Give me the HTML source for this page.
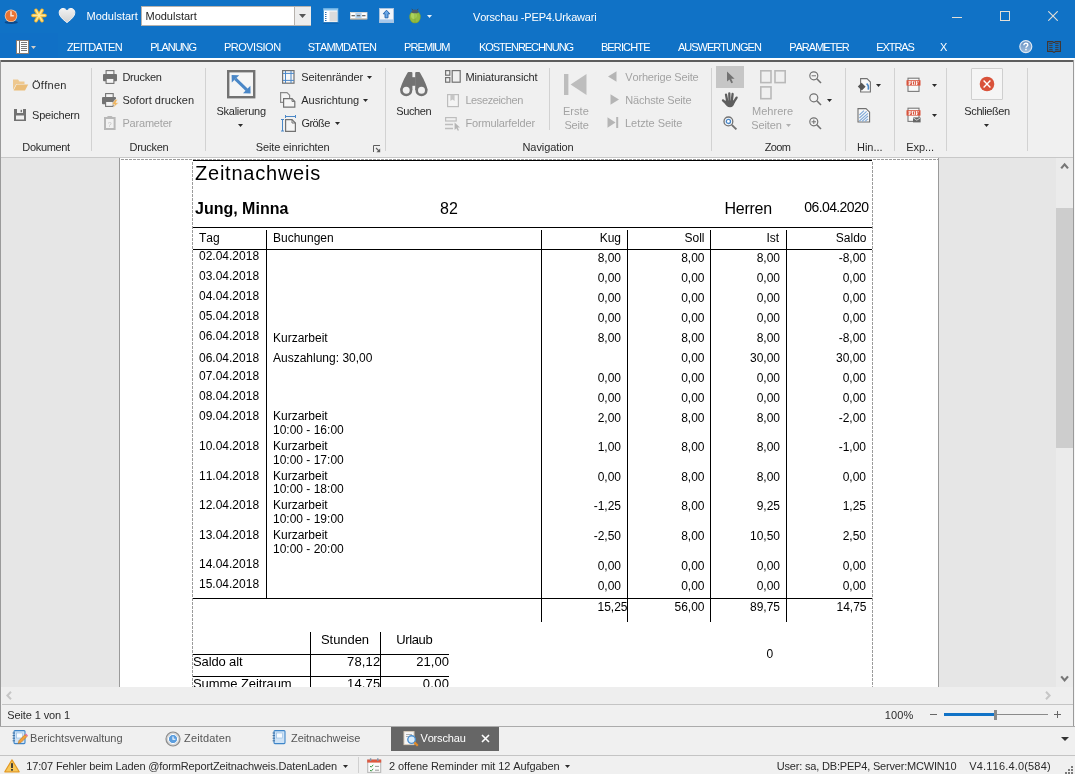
<!DOCTYPE html>
<html><head><meta charset="utf-8"><title>Vorschau</title>
<style>
html,body{margin:0;padding:0;}
body{width:1075px;height:774px;position:relative;overflow:hidden;background:#f0f0f0;font-family:"Liberation Sans",sans-serif;font-kerning:none;}
#app{position:absolute;left:0;top:0;width:1075px;height:774px;will-change:transform;}
.r{position:absolute;display:block;}
.t{position:absolute;white-space:nowrap;color:#2b2b2b;font-family:"Liberation Sans",sans-serif;font-kerning:none;}
.w{color:#fff;}
.g{color:#a3a3a3;}
.d{color:#000;}
</style></head><body><div id="app">
<div class="r" style="left:0px;top:0px;width:1075px;height:58px;background:#1072c6;"></div>
<div class="r" style="left:0px;top:58px;width:1075px;height:2px;background:#ffffff;"></div>
<div class="r" style="left:0px;top:60px;width:1074px;height:2px;background:#5e5e5e;"></div>
<div class="r" style="left:0px;top:62px;width:1075px;height:95px;background:#f0f0f0;"></div>
<div class="r" style="left:0px;top:157px;width:1075px;height:1px;background:#c8c8c8;"></div>
<div class="r" style="left:0px;top:158px;width:1075px;height:529px;background:#e6e6e6;"></div>
<div class="r" style="left:0px;top:60px;width:1px;height:714px;background:#9a9a9a;"></div>
<div class="r" style="left:1073px;top:60px;width:1px;height:714px;background:#9a9a9a;"></div>
<div class="r" style="left:1074px;top:58px;width:1px;height:716px;background:#f6f6f6;"></div>
<svg class="r" style="left:3px;top:7px" width="18" height="20" viewBox="0 0 18 20">
<ellipse cx="8.2" cy="15.4" rx="6.6" ry="1.6" fill="#0b4a8c"/>
<circle cx="8" cy="8.8" r="6.3" fill="#f6c9a8"/>
<circle cx="8" cy="8.8" r="5.5" fill="#ea7434"/>
<path d="M8 4.2V8.8H10.8" stroke="#f6e4d8" stroke-width="1.5" fill="none"/>
</svg>
<svg class="r" style="left:30px;top:7px" width="18" height="17" viewBox="0 0 18 17">
<g stroke="#f3b02c" stroke-width="3.6" stroke-linecap="round">
<path d="M3 8.5H15"/><path d="M6 3.3L12 13.7"/><path d="M12 3.3L6 13.7"/>
</g>
<g stroke="#fbd566" stroke-width="2.2" stroke-linecap="round">
<path d="M3 8.5H15"/><path d="M6 3.3L12 13.7"/><path d="M12 3.3L6 13.7"/>
</g>
<g stroke="#feeeb0" stroke-width="0.9" stroke-linecap="round">
<path d="M3.4 8.3H14.6"/><path d="M6.2 3.5L11.8 13.3"/><path d="M11.8 3.5L6.2 13.3"/>
</g>
</svg>
<svg class="r" style="left:58px;top:7px" width="18" height="17" viewBox="0 0 18 17">
<defs><linearGradient id="hg" x1="0" y1="0" x2="0" y2="1"><stop offset="0" stop-color="#f2f2f2"/><stop offset="1" stop-color="#d2d2d2"/></linearGradient></defs>
<path d="M9 15.6C4.4 12 1.2 9.2 1.2 5.4C1.2 3 3 1.4 5 1.4C6.8 1.4 8.2 2.4 9 4C9.8 2.4 11.2 1.4 13 1.4C15 1.4 16.8 3 16.8 5.4C16.8 9.2 13.6 12 9 15.6Z" fill="url(#hg)" stroke="#f4f4f4" stroke-width="1"/>
</svg>
<div class="t w" style="left:86.5px;top:9.0px;font-size:11px;line-height:14px;letter-spacing:-0.008px;">Modulstart</div>
<div class="r" style="left:141px;top:6px;width:170px;height:20px;background:#ffffff;box-sizing:border-box;border:1px solid #b7b2ad;"></div>
<div class="r" style="left:294px;top:7px;width:16px;height:18px;background:#ededed;border-left:1px solid #b7b2ad;"></div>
<svg class="r" style="left:299px;top:14.0px" width="7" height="4" viewBox="0 0 7 4"><path d="M0 0H7L3.5 4Z" fill="#555"/></svg>
<div class="t " style="left:145.5px;top:9.0px;font-size:11px;line-height:14px; color:#1e1e1e;letter-spacing:-0.008px;">Modulstart</div>
<svg class="r" style="left:323px;top:8px" width="16" height="16" viewBox="0 0 16 16">
<rect x="0.5" y="0.5" width="14.5" height="14" fill="#fff" stroke="#4b9ad6" stroke-width="1"/>
<rect x="0.5" y="0.5" width="14.5" height="2" fill="#8cc4ee"/>
<rect x="6.5" y="3.5" width="7.5" height="10" fill="#dcdcdc"/>
<g fill="#2f6fb0"><rect x="2" y="4" width="1.5" height="1"/><rect x="2" y="6" width="1.5" height="1"/><rect x="2" y="8" width="1.5" height="1"/><rect x="2" y="10" width="1.5" height="1"/><rect x="2" y="12" width="1.5" height="1"/></g>
<rect x="0" y="14.5" width="15.5" height="1" fill="#0a5aa6"/>
</svg>
<svg class="r" style="left:350px;top:12px" width="18" height="8" viewBox="0 0 18 8">
<rect x="0.5" y="0.5" width="16.5" height="6.4" fill="#ffffff" stroke="#e6ddd0" stroke-width="0.8"/>
<rect x="5.4" y="0.8" width="6.2" height="5.6" fill="#b5d2ec"/>
<rect x="1.5" y="3" width="3.4" height="1.3" fill="#6a6a6a"/><rect x="6.8" y="3" width="3.4" height="1.3" fill="#6a6a6a"/><rect x="12.1" y="3" width="3.4" height="1.3" fill="#6a6a6a"/>
<rect x="0.5" y="6.6" width="16.5" height="0.9" fill="#b9a58c"/>
</svg>
<svg class="r" style="left:379px;top:8px" width="15" height="15" viewBox="0 0 15 15">
<rect x="0.5" y="0.5" width="14" height="14" fill="#f1f5fa" stroke="#a9c3de" stroke-width="1"/>
<rect x="1" y="11.4" width="13" height="2.8" fill="#a6c8ec"/>
<path d="M7.5 2.2L10.8 5.8H9V9.8H6V5.8H4.2Z" fill="#6aa7e6" stroke="#1f62ad" stroke-width="0.9" stroke-linejoin="round"/>
</svg>
<svg class="r" style="left:408px;top:8px" width="14" height="16" viewBox="0 0 14 16">
<path d="M3.8 0.8L5.2 2.6M10.2 0.8L8.8 2.6" stroke="#3f4d58" stroke-width="1"/>
<ellipse cx="7" cy="9" rx="5.7" ry="6.3" fill="#7fa634"/>
<ellipse cx="7" cy="9" rx="5" ry="5.6" fill="#93bb42"/>
<ellipse cx="5.8" cy="7.6" rx="2.8" ry="3.4" fill="#aed35c"/>
<path d="M7 5V15" stroke="#7fa634" stroke-width="0.6"/>
<path d="M3.2 4.4C4 2.2 5.4 1.6 7 1.6C8.6 1.6 10 2.2 10.8 4.4C9.6 5 8.4 5.2 7 5.2C5.6 5.2 4.4 5 3.2 4.4Z" fill="#4c5b6a"/>
</svg>
<svg class="r" style="left:427px;top:15.0px" width="5" height="3" viewBox="0 0 5 3"><path d="M0 0H5L2.5 3Z" fill="#e8f0f8"/></svg>
<div class="t w" style="left:473px;top:10.0px;font-size:11px;line-height:14px;letter-spacing:-0.186px;">Vorschau -PEP4.Urkawari</div>
<div class="r" style="left:952px;top:17px;width:10px;height:1px;background:#e4dfd6;"></div>
<div class="r" style="left:1000px;top:11px;width:10px;height:10px;background:transparent;box-sizing:border-box;border:1px solid #e4dfd6;"></div>
<svg class="r" style="left:1048px;top:11px" width="10" height="10" viewBox="0 0 10 10"><path d="M0.3 0.3L9.7 9.7M9.7 0.3L0.3 9.7" stroke="#e4dfd6" stroke-width="1.1"/></svg>
<div class="r" style="left:0px;top:33px;width:58px;height:25px;background:#1070c6;"></div>
<svg class="r" style="left:16px;top:40px" width="13" height="14" viewBox="0 0 13 14">
<rect x="0.5" y="0.5" width="12" height="13" fill="#fff" stroke="#8c7868" stroke-width="0.9"/>
<rect x="3" y="1" width="1" height="12" fill="#6e6e6e"/>
<g fill="#7a7a7a"><rect x="5" y="2" width="6" height="1"/><rect x="5" y="4" width="6" height="1"/><rect x="5" y="6" width="6" height="1"/><rect x="5" y="8" width="6" height="1"/><rect x="5" y="10" width="6" height="1"/></g>
</svg>
<svg class="r" style="left:30.6px;top:45.7px" width="5" height="3" viewBox="0 0 5 3"><path d="M0 0H5L2.5 3Z" fill="#d2cdc6"/></svg>
<div class="t w" style="left:67.1px;top:40.0px;font-size:11px;line-height:14px;letter-spacing:-0.692px;">ZEITDATEN</div>
<div class="t w" style="left:150.2px;top:40.0px;font-size:11px;line-height:14px;letter-spacing:-1.050px;">PLANUNG</div>
<div class="t w" style="left:223.9px;top:40.0px;font-size:11px;line-height:14px;letter-spacing:-0.492px;">PROVISION</div>
<div class="t w" style="left:307.8px;top:40.0px;font-size:11px;line-height:14px;letter-spacing:-0.879px;">STAMMDATEN</div>
<div class="t w" style="left:404.0px;top:40.0px;font-size:11px;line-height:14px;letter-spacing:-0.911px;">PREMIUM</div>
<div class="t w" style="left:479.0px;top:40.0px;font-size:11px;line-height:14px;letter-spacing:-1.054px;">KOSTENRECHNUNG</div>
<div class="t w" style="left:600.9px;top:40.0px;font-size:11px;line-height:14px;letter-spacing:-0.862px;">BERICHTE</div>
<div class="t w" style="left:677.9px;top:40.0px;font-size:11px;line-height:14px;letter-spacing:-0.977px;">AUSWERTUNGEN</div>
<div class="t w" style="left:789.2px;top:40.0px;font-size:11px;line-height:14px;letter-spacing:-0.997px;">PARAMETER</div>
<div class="t w" style="left:876.2px;top:40.0px;font-size:11px;line-height:14px;letter-spacing:-1.065px;">EXTRAS</div>
<div class="t w" style="left:940.0px;top:40.0px;font-size:11px;line-height:14px;">X</div>
<svg class="r" style="left:1019px;top:40px" width="14" height="14" viewBox="0 0 14 14">
<defs><linearGradient id="hlp" x1="0" y1="0" x2="0" y2="1"><stop offset="0" stop-color="#5f8cc0"/><stop offset="1" stop-color="#a4c0de"/></linearGradient></defs>
<circle cx="6.8" cy="6.6" r="6" fill="url(#hlp)" stroke="#dde8f4" stroke-width="1.2"/>
<path d="M4.9 5.2C4.9 3.9 5.8 3.3 6.9 3.3C8 3.3 8.8 3.9 8.8 4.9C8.8 6.2 7 6.3 7 7.8" stroke="#fff" stroke-width="1.4" fill="none"/>
<rect x="6.2" y="8.8" width="1.5" height="1.5" fill="#fff"/>
</svg>
<svg class="r" style="left:1047px;top:41px" width="14" height="12" viewBox="0 0 14 12">
<path d="M0.6 0.6H5.6L6.4 1.4H7.6L8.4 0.6H13.4V10.4H8.4L7.6 11.2H6.4L5.6 10.4H0.6Z" fill="none" stroke="#43352f" stroke-width="1.1"/>
<g stroke="#43352f" stroke-width="0.9"><path d="M2.2 2.6H5.6M2.2 4.6H5.6M2.2 6.6H5.6M2.2 8.6H5.6M8.2 2.6H11.6M8.2 4.6H11.6M8.2 6.6H11.6M8.2 8.6H11.6"/></g>
</svg>
<div class="r" style="left:91px;top:68px;width:1px;height:83px;background:#d2d2d2;"></div>
<div class="r" style="left:205px;top:68px;width:1px;height:83px;background:#d2d2d2;"></div>
<div class="r" style="left:385px;top:68px;width:1px;height:83px;background:#d2d2d2;"></div>
<div class="r" style="left:711px;top:68px;width:1px;height:83px;background:#d2d2d2;"></div>
<div class="r" style="left:845px;top:68px;width:1px;height:83px;background:#d2d2d2;"></div>
<div class="r" style="left:894px;top:68px;width:1px;height:83px;background:#d2d2d2;"></div>
<div class="r" style="left:946px;top:68px;width:1px;height:83px;background:#d2d2d2;"></div>
<div class="r" style="left:1027px;top:68px;width:1px;height:83px;background:#d2d2d2;"></div>
<div class="r" style="left:549px;top:68px;width:1px;height:62px;background:#d2d2d2;"></div>
<div class="t " style="left:22.3px;top:140.0px;font-size:11px;line-height:14px;letter-spacing:-0.322px;">Dokument</div>
<div class="t " style="left:129.5px;top:140.0px;font-size:11px;line-height:14px;letter-spacing:-0.313px;">Drucken</div>
<div class="t " style="left:255.7px;top:140.0px;font-size:11px;line-height:14px;letter-spacing:-0.123px;">Seite einrichten</div>
<div class="t " style="left:522.5px;top:140.0px;font-size:11px;line-height:14px;letter-spacing:-0.088px;">Navigation</div>
<div class="t " style="left:764.7px;top:140.0px;font-size:11px;line-height:14px;letter-spacing:-0.645px;">Zoom</div>
<div class="t " style="left:857px;top:140.0px;font-size:11px;line-height:14px;letter-spacing:-0.040px;">Hin...</div>
<div class="t " style="left:906.2px;top:140.0px;font-size:11px;line-height:14px;letter-spacing:-0.067px;">Exp...</div>
<svg class="r" style="left:373px;top:145px" width="8" height="8" viewBox="0 0 8 8"><path d="M0.5 7V0.5H7" stroke="#5e5e5e" stroke-width="1" fill="none"/><path d="M3 3L6.4 6.4" stroke="#5e5e5e" stroke-width="1.1"/><path d="M7.2 3.4V7.2H3.4Z" fill="#5e5e5e"/></svg>
<svg class="r" style="left:13px;top:79px" width="16" height="12" viewBox="0 0 16 12">
<path d="M0 0.5H5L6.5 2.5H11.5V5H3.2L0 11Z" fill="#eec88f"/>
<path d="M3.6 5.6H15.2L12 11.4H0.6Z" fill="#ebbd78"/>
</svg>
<div class="t " style="left:32px;top:78.0px;font-size:11px;line-height:14px;letter-spacing:0.292px;">Öffnen</div>
<svg class="r" style="left:14px;top:109px" width="13" height="12" viewBox="0 0 13 12">
<path d="M0 0H12V12H0Z" fill="#727272"/>
<rect x="3" y="0" width="6" height="4" fill="#f0f0f0"/><rect x="6.6" y="0.8" width="1.4" height="2.4" fill="#727272"/>
<rect x="2" y="6.5" width="8" height="4" fill="#f0f0f0"/>
</svg>
<div class="t " style="left:32px;top:108.0px;font-size:11px;line-height:14px;letter-spacing:-0.207px;">Speichern</div>
<svg class="r" style="left:103px;top:70px" width="14" height="14" viewBox="0 0 14 14">
<rect x="3.1" y="0.6" width="7.8" height="4" fill="#f4f4f4" stroke="#727272" stroke-width="1.1"/>
<rect x="0" y="4" width="14" height="7.2" rx="1" fill="#727272"/>
<rect x="3.1" y="8.4" width="7.8" height="5" fill="#f4f4f4" stroke="#727272" stroke-width="1.1"/>
</svg>
<div class="t " style="left:122.4px;top:70.0px;font-size:11px;line-height:14px;letter-spacing:-0.246px;">Drucken</div>
<svg class="r" style="left:102px;top:93px" width="17" height="15" viewBox="0 0 17 15">
<rect x="3.6" y="0.6" width="7.6" height="4" fill="#f4f4f4" stroke="#727272" stroke-width="1.1"/>
<rect x="0" y="4" width="14" height="7.2" rx="1" fill="#727272"/>
<rect x="3.6" y="8.4" width="7.6" height="5" fill="#f4f4f4" stroke="#727272" stroke-width="1.1"/>
<path d="M13.2 6.4L9.8 11.4H12.6L11 15L16.6 9.8H13.8L15.6 6.4Z" fill="#f0b45c" stroke="#f0f0f0" stroke-width="0.5"/>
</svg>
<div class="t " style="left:122.4px;top:93.0px;font-size:11px;line-height:14px;letter-spacing:0.011px;">Sofort drucken</div>
<svg class="r" style="left:104px;top:116px" width="12" height="14" viewBox="0 0 12 14">
<rect x="1" y="2" width="9.6" height="11" fill="#f2f2f2" stroke="#b8b8b8" stroke-width="2"/>
<rect x="3.2" y="0" width="5.2" height="3" rx="1" fill="#b8b8b8"/>
<text x="5.7" y="10.5" font-size="7" font-family="Liberation Sans" text-anchor="middle" fill="#bdbdbd">?</text>
</svg>
<div class="t g" style="left:122.4px;top:116.0px;font-size:11px;line-height:14px;letter-spacing:-0.184px;">Parameter</div>
<svg class="r" style="left:227px;top:70px" width="29" height="29" viewBox="0 0 29 29">
<rect x="1.2" y="1.2" width="26" height="26" fill="#f5f5f5" stroke="#727272" stroke-width="2.4"/>
<path d="M8.4 8.8L19.8 19.8" stroke="#4a87c7" stroke-width="3"/>
<path d="M4.6 5L12.2 5.2L4.8 12.6Z" fill="#4a87c7"/>
<path d="M23.6 23.4L16 23.2L23.4 15.8Z" fill="#4a87c7"/>
</svg>
<div class="t " style="left:216.5px;top:104.0px;font-size:11px;line-height:14px;letter-spacing:-0.266px;">Skalierung</div>
<svg class="r" style="left:238px;top:123.5px" width="5" height="3" viewBox="0 0 5 3"><path d="M0 0H5L2.5 3Z" fill="#2b2b2b"/></svg>
<svg class="r" style="left:282px;top:70px" width="13" height="14" viewBox="0 0 13 14">
<rect x="0.6" y="0.6" width="11.4" height="12.6" fill="#f7f7f7" stroke="#727272" stroke-width="1.2"/>
<path d="M3.5 1V13M9 1V13M1 3.4H12M1 10.4H12" stroke="#4a87c7" stroke-width="1"/>
</svg>
<div class="t " style="left:301.3px;top:70.0px;font-size:11px;line-height:14px;letter-spacing:-0.092px;">Seitenränder</div>
<svg class="r" style="left:367px;top:76.0px" width="5" height="3" viewBox="0 0 5 3"><path d="M0 0H5L2.5 3Z" fill="#2b2b2b"/></svg>
<svg class="r" style="left:280px;top:92px" width="16" height="16" viewBox="0 0 16 16">
<path d="M0.6 0.6H7L9.6 3.2V10.4H0.6Z" fill="#f5f5f5" stroke="#8a8a8a" stroke-width="1.2"/>
<path d="M3.6 6.6H12L14.8 9.4V15.2H3.6Z" fill="#f5f5f5" stroke="#727272" stroke-width="1.2"/>
<path d="M12 6.6V9.4H14.8" fill="none" stroke="#727272" stroke-width="1"/>
</svg>
<div class="t " style="left:301.3px;top:93.0px;font-size:11px;line-height:14px;letter-spacing:-0.020px;">Ausrichtung</div>
<svg class="r" style="left:363px;top:99.0px" width="5" height="3" viewBox="0 0 5 3"><path d="M0 0H5L2.5 3Z" fill="#2b2b2b"/></svg>
<svg class="r" style="left:281px;top:115px" width="15" height="17" viewBox="0 0 15 17">
<path d="M1.5 4.5V16M0 4.5H3M0 16H3" stroke="#4a87c7" stroke-width="1"/>
<path d="M4.5 1.5H14.5M4.5 0V3M14.5 0V3" stroke="#4a87c7" stroke-width="1"/>
<path d="M4.6 4.6H11L14.4 8V16.4H4.6Z" fill="#f5f5f5" stroke="#727272" stroke-width="1.2"/>
<path d="M11 4.6V8H14.4" fill="none" stroke="#727272" stroke-width="1"/>
</svg>
<div class="t " style="left:301.5px;top:116.0px;font-size:11px;line-height:14px;letter-spacing:-0.574px;">Größe</div>
<svg class="r" style="left:335px;top:122.0px" width="5" height="3" viewBox="0 0 5 3"><path d="M0 0H5L2.5 3Z" fill="#2b2b2b"/></svg>
<svg class="r" style="left:399px;top:71px" width="30" height="26" viewBox="0 0 30 26">
<path d="M9.6 1H12.4Q13.4 1 13.4 2V19H1.4C1.8 14 6 6 8.4 2Q8.8 1 9.6 1Z" fill="#727272"/>
<path d="M20 1H17.2Q16.2 1 16.2 2V19H28.4C28 14 23.6 6 21.2 2Q20.8 1 20 1Z" fill="#727272"/>
<rect x="13" y="6.2" width="3.6" height="8.6" fill="#727272"/>
<circle cx="7.2" cy="19.2" r="4.8" fill="#f0f0f0" stroke="#727272" stroke-width="2.6"/>
<circle cx="22.5" cy="19.2" r="4.8" fill="#f0f0f0" stroke="#727272" stroke-width="2.6"/>
</svg>
<div class="t " style="left:396.2px;top:104.0px;font-size:11px;line-height:14px;letter-spacing:-0.364px;">Suchen</div>
<svg class="r" style="left:445px;top:70px" width="16" height="13" viewBox="0 0 16 13">
<rect x="0.6" y="0.6" width="4.2" height="4.6" fill="none" stroke="#727272" stroke-width="1.2"/>
<rect x="0.6" y="7.6" width="4.2" height="4.6" fill="none" stroke="#727272" stroke-width="1.2"/>
<rect x="7.2" y="0.6" width="8" height="11.6" fill="none" stroke="#727272" stroke-width="1.2"/>
</svg>
<div class="t " style="left:465.4px;top:70.0px;font-size:11px;line-height:14px;letter-spacing:-0.121px;">Miniaturansicht</div>
<svg class="r" style="left:447px;top:93.6px" width="13" height="14" viewBox="0 0 13 14">
<rect x="0.6" y="0.6" width="10.8" height="12" fill="#f4f4f4" stroke="#bdbdbd" stroke-width="1.2"/>
<path d="M3.4 0.6H7.6V7L5.5 5.4L3.4 7Z" fill="#c6c6c6"/>
</svg>
<div class="t g" style="left:465.4px;top:93.0px;font-size:11px;line-height:14px;letter-spacing:-0.389px;">Lesezeichen</div>
<svg class="r" style="left:445px;top:117px" width="16" height="14" viewBox="0 0 16 14">
<rect x="0.6" y="0.6" width="10.6" height="3.4" fill="none" stroke="#bdbdbd" stroke-width="1.2"/>
<path d="M0 7.5H8M0 11.5H8" stroke="#bdbdbd" stroke-width="1.3"/>
<path d="M9.6 5.4V13L11.4 11.2L12.8 13.8L14 13.2L12.6 10.6H15Z" fill="#b5b5b5"/>
</svg>
<div class="t g" style="left:465.5px;top:116.0px;font-size:11px;line-height:14px;letter-spacing:-0.142px;">Formularfelder</div>
<svg class="r" style="left:564px;top:73.5px" width="23" height="21" viewBox="0 0 23 21"><rect x="0" y="0" width="4.4" height="21" fill="#bdbdbd"/><path d="M22.5 0V21L6.6 10.5Z" fill="#bdbdbd"/></svg>
<div class="t g" style="left:563px;top:104.0px;font-size:11px;line-height:14px;letter-spacing:0.026px;">Erste</div>
<div class="t g" style="left:564.4px;top:118.0px;font-size:11px;line-height:14px;letter-spacing:-0.172px;">Seite</div>
<svg class="r" style="left:608px;top:71px" width="9" height="11" viewBox="0 0 9 11"><path d="M8.5 0.3V10.7L0 5.5Z" fill="#b5b5b5"/></svg>
<div class="t g" style="left:625.3px;top:70.0px;font-size:11px;line-height:14px;letter-spacing:-0.174px;">Vorherige Seite</div>
<svg class="r" style="left:610px;top:94px" width="9" height="11" viewBox="0 0 9 11"><path d="M0.5 0.3V10.7L9 5.5Z" fill="#b5b5b5"/></svg>
<div class="t g" style="left:625.3px;top:93.0px;font-size:11px;line-height:14px;letter-spacing:-0.183px;">Nächste Seite</div>
<svg class="r" style="left:607px;top:117px" width="12" height="11" viewBox="0 0 12 11"><path d="M0.5 0.3V10.7L8.5 5.5Z" fill="#b5b5b5"/><rect x="9.2" y="0" width="2" height="11" fill="#b5b5b5"/></svg>
<div class="t g" style="left:625px;top:116.0px;font-size:11px;line-height:14px;letter-spacing:-0.055px;">Letzte Seite</div>
<div class="r" style="left:716px;top:66px;width:28px;height:22px;background:#c6c6c6;"></div>
<svg class="r" style="left:726px;top:71px" width="10" height="13" viewBox="0 0 10 13"><path d="M1 0.6V10.6L3.5 8.4L5.3 12.2L7 11.4L5.2 7.7H8.6Z" fill="#727272"/></svg>
<svg class="r" style="left:721px;top:91px" width="18" height="17" viewBox="0 0 18 17">
<g stroke="#5e5e5e" stroke-width="2.3" stroke-linecap="round">
<path d="M6.2 10L5 3.6"/><path d="M8.5 10L8.3 2.4"/><path d="M10.8 10L11.6 3"/><path d="M12.6 11.4L15.6 6.6"/><path d="M5.2 12.4L2 9.4"/>
</g>
<path d="M4.4 9.4H13L13.6 11.4C13 14.4 11.6 16.2 9 16.2C6.4 16.2 4.6 14.4 3.6 11.2Z" fill="#5e5e5e"/>
</svg>
<svg class="r" style="left:723px;top:115.5px" width="15" height="15" viewBox="0 0 15 15">
<circle cx="5.4" cy="5.4" r="4.4" fill="#f4f7fb" stroke="#727272" stroke-width="1.3"/>
<circle cx="5.4" cy="5.4" r="2.1" fill="#fff" stroke="#4a87c7" stroke-width="1.3"/>
<path d="M8.8 8.8L13.4 13.4" stroke="#727272" stroke-width="1.9"/>
</svg>
<svg class="r" style="left:760px;top:70px" width="27" height="30" viewBox="0 0 27 30">
<rect x="0.8" y="0.8" width="10.2" height="11.8" fill="none" stroke="#b9b9b9" stroke-width="1.6"/>
<rect x="15" y="0.8" width="10.2" height="11.8" fill="none" stroke="#b9b9b9" stroke-width="1.6"/>
<rect x="0.8" y="16.9" width="10.2" height="11.8" fill="none" stroke="#b9b9b9" stroke-width="1.6"/>
</svg>
<div class="t g" style="left:752px;top:104.0px;font-size:11px;line-height:14px;letter-spacing:0.037px;">Mehrere</div>
<div class="t g" style="left:751.3px;top:118.0px;font-size:11px;line-height:14px;letter-spacing:-0.143px;">Seiten</div>
<svg class="r" style="left:786px;top:124.0px" width="5" height="3" viewBox="0 0 5 3"><path d="M0 0H5L2.5 3Z" fill="#b0b0b0"/></svg>
<svg class="r" style="left:809px;top:71px" width="14" height="14" viewBox="0 0 14 14"><circle cx="4.8" cy="4.8" r="4" fill="#f3f3f3" stroke="#727272" stroke-width="1.15"/><path d="M7.8 7.8L12 12" stroke="#727272" stroke-width="1.6"/><path d="M2.6 4.8H7" stroke="#727272" stroke-width="1"/></svg>
<svg class="r" style="left:809px;top:93px" width="14" height="14" viewBox="0 0 14 14"><circle cx="4.8" cy="4.8" r="4" fill="#f3f3f3" stroke="#727272" stroke-width="1.15"/><path d="M7.8 7.8L12 12" stroke="#727272" stroke-width="1.6"/></svg>
<svg class="r" style="left:827px;top:99.0px" width="5" height="3" viewBox="0 0 5 3"><path d="M0 0H5L2.5 3Z" fill="#2b2b2b"/></svg>
<svg class="r" style="left:809px;top:117px" width="14" height="14" viewBox="0 0 14 14"><circle cx="4.8" cy="4.8" r="4" fill="#f3f3f3" stroke="#727272" stroke-width="1.15"/><path d="M7.8 7.8L12 12" stroke="#727272" stroke-width="1.6"/><path d="M2.6 4.8H7" stroke="#727272" stroke-width="1"/><path d="M4.8 2.6V7" stroke="#727272" stroke-width="1"/></svg>
<svg class="r" style="left:857px;top:78px" width="15" height="15" viewBox="0 0 15 15">
<path d="M3.6 0.6H10L13.4 4V14H3.6Z" fill="#f8f8f8" stroke="#727272" stroke-width="1.1"/>
<path d="M4.6 4.8L8.6 8.8L4.8 12.4L0.8 8.6Z" fill="#555"/>
<path d="M9.6 5.6C11.4 7 11.8 9 11.2 11.6" stroke="#4a87c7" stroke-width="1.6" fill="none"/>
</svg>
<svg class="r" style="left:876px;top:83.5px" width="5" height="3" viewBox="0 0 5 3"><path d="M0 0H5L2.5 3Z" fill="#2b2b2b"/></svg>
<svg class="r" style="left:857px;top:108px" width="14" height="15" viewBox="0 0 14 15">
<path d="M1 0.6H9L12.6 4.2V14H1Z" fill="#f8f8f8" stroke="#707070" stroke-width="1.1"/>
<path d="M2.4 7L7 2.6M2.4 10L9.6 3.4M2.4 13L11 5.4M5 13.4L11 8M8 13.4L11 10.8" stroke="#7fa9d8" stroke-width="1.1"/>
</svg>
<svg class="r" style="left:905.6px;top:77px" width="16" height="16" viewBox="0 0 16 16"><rect x="2" y="1.2" width="11" height="13.2" fill="#f8f8f8" stroke="#7a7a7a" stroke-width="1.1"/>
<rect x="0.5" y="3.2" width="14" height="5.4" fill="#d9533c"/>
<text x="7.5" y="7.9" font-size="5.4" font-weight="bold" font-family="Liberation Serif" text-anchor="middle" fill="#fff">PDF</text></svg>
<svg class="r" style="left:932px;top:83.5px" width="5" height="3" viewBox="0 0 5 3"><path d="M0 0H5L2.5 3Z" fill="#2b2b2b"/></svg>
<svg class="r" style="left:905.6px;top:107px" width="16" height="16" viewBox="0 0 16 16"><rect x="2" y="1.2" width="11" height="13.2" fill="#f8f8f8" stroke="#7a7a7a" stroke-width="1.1"/>
<rect x="0.5" y="3.2" width="14" height="5.4" fill="#d9533c"/>
<text x="7.5" y="7.9" font-size="5.4" font-weight="bold" font-family="Liberation Serif" text-anchor="middle" fill="#fff">PDF</text><rect x="7" y="10.4" width="7.6" height="5" fill="#666"/><path d="M7.2 10.8L10.8 13.2L14.4 10.8" stroke="#f0f0f0" stroke-width="0.8" fill="none"/></svg>
<svg class="r" style="left:932px;top:113.5px" width="5" height="3" viewBox="0 0 5 3"><path d="M0 0H5L2.5 3Z" fill="#2b2b2b"/></svg>
<div class="r" style="left:971px;top:68px;width:32px;height:32px;background:#f5f5f5;box-sizing:border-box;border:1px solid #cfcfcf;border-radius:1px;"></div>
<svg class="r" style="left:979.4px;top:76px" width="16" height="16" viewBox="0 0 16 16"><circle cx="8" cy="8" r="7.3" fill="#d9523a"/><path d="M4.6 4.6L11.4 11.4M11.4 4.6L4.6 11.4" stroke="#fff" stroke-width="1.4"/></svg>
<div class="t " style="left:964.3px;top:104.0px;font-size:11px;line-height:14px;letter-spacing:-0.379px;">Schließen</div>
<svg class="r" style="left:984px;top:124.0px" width="5" height="3" viewBox="0 0 5 3"><path d="M0 0H5L2.5 3Z" fill="#2b2b2b"/></svg>
<div class="r" style="left:119px;top:158px;width:1px;height:529px;background:#9a9a9a;"></div>
<div class="r" style="left:120px;top:158px;width:818px;height:529px;background:#ffffff;"></div>
<div class="r" style="left:938px;top:158px;width:1px;height:529px;background:#9a9a9a;"></div>
<div class="r" style="left:121px;top:159px;width:817px;height:1px;background:transparent;background:repeating-linear-gradient(90deg,#9c9c9c 0 3px,transparent 3px 4px);"></div>
<div class="r" style="left:192px;top:162px;width:1px;height:525px;background:transparent;background:repeating-linear-gradient(180deg,#9c9c9c 0 2.5px,transparent 2.5px 4px);"></div>
<div class="r" style="left:872px;top:162px;width:1px;height:525px;background:transparent;background:repeating-linear-gradient(180deg,#9c9c9c 0 2.5px,transparent 2.5px 4px);"></div>
<div class="r" style="left:193px;top:160px;width:679px;height:1px;background:#000;"></div>
<div class="t d" style="left:195px;top:160.67px;font-size:20px;line-height:24px;letter-spacing:0.771px;">Zeitnachweis</div>
<div class="t d" style="left:195px;top:198.96px;font-size:16px;line-height:19px;font-weight:bold;">Jung, Minna</div>
<div class="t d" style="left:440px;top:198.96px;font-size:16px;line-height:19px;">82</div>
<div class="t d" style="left:724.6px;top:198.76px;font-size:16px;line-height:19px;letter-spacing:-0.293px;">Herren</div>
<div class="t d" style="left:804.3px;top:198.65px;font-size:14px;line-height:17px;letter-spacing:-0.602px;">06.04.2020</div>
<div class="r" style="left:193px;top:227px;width:679px;height:1px;background:#000;"></div>
<div class="r" style="left:193px;top:249px;width:679px;height:1px;background:#000;"></div>
<div class="r" style="left:193px;top:598px;width:679px;height:1px;background:#000;"></div>
<div class="r" style="left:266px;top:230px;width:1px;height:368px;background:#000;"></div>
<div class="r" style="left:541px;top:230px;width:1px;height:392px;background:#000;"></div>
<div class="r" style="left:627px;top:230px;width:1px;height:392px;background:#000;"></div>
<div class="r" style="left:710px;top:230px;width:1px;height:392px;background:#000;"></div>
<div class="r" style="left:786px;top:230px;width:1px;height:392px;background:#000;"></div>
<div class="t d" style="left:199px;top:230.84px;font-size:12px;line-height:14px;">Tag</div>
<div class="t d" style="left:273px;top:230.84px;font-size:12px;line-height:14px;">Buchungen</div>
<div class="t d" style="right:454px;top:230.84px;font-size:12px;line-height:14px;">Kug</div>
<div class="t d" style="right:370.5px;top:230.84px;font-size:12px;line-height:14px;">Soll</div>
<div class="t d" style="right:295.79999999999995px;top:230.84px;font-size:12px;line-height:14px;">Ist</div>
<div class="t d" style="right:208.5px;top:230.84px;font-size:12px;line-height:14px;">Saldo</div>
<div class="t d" style="left:199px;top:248.84px;font-size:12px;line-height:14px;">02.04.2018</div>
<div class="t d" style="right:454px;top:250.84px;font-size:12px;line-height:14px;">8,00</div>
<div class="t d" style="right:370.5px;top:250.84px;font-size:12px;line-height:14px;">8,00</div>
<div class="t d" style="right:295px;top:250.84px;font-size:12px;line-height:14px;">8,00</div>
<div class="t d" style="right:209px;top:250.84px;font-size:12px;line-height:14px;">-8,00</div>
<div class="t d" style="left:199px;top:268.84px;font-size:12px;line-height:14px;">03.04.2018</div>
<div class="t d" style="right:454px;top:270.84px;font-size:12px;line-height:14px;">0,00</div>
<div class="t d" style="right:370.5px;top:270.84px;font-size:12px;line-height:14px;">0,00</div>
<div class="t d" style="right:295px;top:270.84px;font-size:12px;line-height:14px;">0,00</div>
<div class="t d" style="right:209px;top:270.84px;font-size:12px;line-height:14px;">0,00</div>
<div class="t d" style="left:199px;top:288.84px;font-size:12px;line-height:14px;">04.04.2018</div>
<div class="t d" style="right:454px;top:290.84px;font-size:12px;line-height:14px;">0,00</div>
<div class="t d" style="right:370.5px;top:290.84px;font-size:12px;line-height:14px;">0,00</div>
<div class="t d" style="right:295px;top:290.84px;font-size:12px;line-height:14px;">0,00</div>
<div class="t d" style="right:209px;top:290.84px;font-size:12px;line-height:14px;">0,00</div>
<div class="t d" style="left:199px;top:308.84px;font-size:12px;line-height:14px;">05.04.2018</div>
<div class="t d" style="right:454px;top:310.84px;font-size:12px;line-height:14px;">0,00</div>
<div class="t d" style="right:370.5px;top:310.84px;font-size:12px;line-height:14px;">0,00</div>
<div class="t d" style="right:295px;top:310.84px;font-size:12px;line-height:14px;">0,00</div>
<div class="t d" style="right:209px;top:310.84px;font-size:12px;line-height:14px;">0,00</div>
<div class="t d" style="left:199px;top:328.84px;font-size:12px;line-height:14px;">06.04.2018</div>
<div class="t d" style="left:273px;top:330.84px;font-size:12px;line-height:14px;">Kurzarbeit</div>
<div class="t d" style="right:454px;top:330.84px;font-size:12px;line-height:14px;">8,00</div>
<div class="t d" style="right:370.5px;top:330.84px;font-size:12px;line-height:14px;">8,00</div>
<div class="t d" style="right:295px;top:330.84px;font-size:12px;line-height:14px;">8,00</div>
<div class="t d" style="right:209px;top:330.84px;font-size:12px;line-height:14px;">-8,00</div>
<div class="t d" style="left:199px;top:350.84px;font-size:12px;line-height:14px;">06.04.2018</div>
<div class="t d" style="left:273px;top:350.84px;font-size:12px;line-height:14px;">Auszahlung: 30,00</div>
<div class="t d" style="right:370.5px;top:350.84px;font-size:12px;line-height:14px;">0,00</div>
<div class="t d" style="right:295px;top:350.84px;font-size:12px;line-height:14px;">30,00</div>
<div class="t d" style="right:209px;top:350.84px;font-size:12px;line-height:14px;">30,00</div>
<div class="t d" style="left:199px;top:368.84px;font-size:12px;line-height:14px;">07.04.2018</div>
<div class="t d" style="right:454px;top:370.84px;font-size:12px;line-height:14px;">0,00</div>
<div class="t d" style="right:370.5px;top:370.84px;font-size:12px;line-height:14px;">0,00</div>
<div class="t d" style="right:295px;top:370.84px;font-size:12px;line-height:14px;">0,00</div>
<div class="t d" style="right:209px;top:370.84px;font-size:12px;line-height:14px;">0,00</div>
<div class="t d" style="left:199px;top:388.84px;font-size:12px;line-height:14px;">08.04.2018</div>
<div class="t d" style="right:454px;top:390.84px;font-size:12px;line-height:14px;">0,00</div>
<div class="t d" style="right:370.5px;top:390.84px;font-size:12px;line-height:14px;">0,00</div>
<div class="t d" style="right:295px;top:390.84px;font-size:12px;line-height:14px;">0,00</div>
<div class="t d" style="right:209px;top:390.84px;font-size:12px;line-height:14px;">0,00</div>
<div class="t d" style="left:199px;top:408.84px;font-size:12px;line-height:14px;">09.04.2018</div>
<div class="t d" style="left:273px;top:408.84px;font-size:12px;line-height:14px;">Kurzarbeit</div>
<div class="t d" style="left:273px;top:422.84px;font-size:12px;line-height:14px;">10:00 - 16:00</div>
<div class="t d" style="right:454px;top:410.84px;font-size:12px;line-height:14px;">2,00</div>
<div class="t d" style="right:370.5px;top:410.84px;font-size:12px;line-height:14px;">8,00</div>
<div class="t d" style="right:295px;top:410.84px;font-size:12px;line-height:14px;">8,00</div>
<div class="t d" style="right:209px;top:410.84px;font-size:12px;line-height:14px;">-2,00</div>
<div class="t d" style="left:199px;top:438.84px;font-size:12px;line-height:14px;">10.04.2018</div>
<div class="t d" style="left:273px;top:438.84px;font-size:12px;line-height:14px;">Kurzarbeit</div>
<div class="t d" style="left:273px;top:452.84px;font-size:12px;line-height:14px;">10:00 - 17:00</div>
<div class="t d" style="right:454px;top:439.84px;font-size:12px;line-height:14px;">1,00</div>
<div class="t d" style="right:370.5px;top:439.84px;font-size:12px;line-height:14px;">8,00</div>
<div class="t d" style="right:295px;top:439.84px;font-size:12px;line-height:14px;">8,00</div>
<div class="t d" style="right:209px;top:439.84px;font-size:12px;line-height:14px;">-1,00</div>
<div class="t d" style="left:199px;top:468.84px;font-size:12px;line-height:14px;">11.04.2018</div>
<div class="t d" style="left:273px;top:468.84px;font-size:12px;line-height:14px;">Kurzarbeit</div>
<div class="t d" style="left:273px;top:481.84px;font-size:12px;line-height:14px;">10:00 - 18:00</div>
<div class="t d" style="right:454px;top:469.84px;font-size:12px;line-height:14px;">0,00</div>
<div class="t d" style="right:370.5px;top:469.84px;font-size:12px;line-height:14px;">8,00</div>
<div class="t d" style="right:295px;top:469.84px;font-size:12px;line-height:14px;">8,00</div>
<div class="t d" style="right:209px;top:469.84px;font-size:12px;line-height:14px;">0,00</div>
<div class="t d" style="left:199px;top:497.84px;font-size:12px;line-height:14px;">12.04.2018</div>
<div class="t d" style="left:273px;top:497.84px;font-size:12px;line-height:14px;">Kurzarbeit</div>
<div class="t d" style="left:273px;top:511.84px;font-size:12px;line-height:14px;">10:00 - 19:00</div>
<div class="t d" style="right:454px;top:498.84px;font-size:12px;line-height:14px;">-1,25</div>
<div class="t d" style="right:370.5px;top:498.84px;font-size:12px;line-height:14px;">8,00</div>
<div class="t d" style="right:295px;top:498.84px;font-size:12px;line-height:14px;">9,25</div>
<div class="t d" style="right:209px;top:498.84px;font-size:12px;line-height:14px;">1,25</div>
<div class="t d" style="left:199px;top:527.84px;font-size:12px;line-height:14px;">13.04.2018</div>
<div class="t d" style="left:273px;top:527.84px;font-size:12px;line-height:14px;">Kurzarbeit</div>
<div class="t d" style="left:273px;top:541.84px;font-size:12px;line-height:14px;">10:00 - 20:00</div>
<div class="t d" style="right:454px;top:528.84px;font-size:12px;line-height:14px;">-2,50</div>
<div class="t d" style="right:370.5px;top:528.84px;font-size:12px;line-height:14px;">8,00</div>
<div class="t d" style="right:295px;top:528.84px;font-size:12px;line-height:14px;">10,50</div>
<div class="t d" style="right:209px;top:528.84px;font-size:12px;line-height:14px;">2,50</div>
<div class="t d" style="left:199px;top:556.84px;font-size:12px;line-height:14px;">14.04.2018</div>
<div class="t d" style="right:454px;top:558.84px;font-size:12px;line-height:14px;">0,00</div>
<div class="t d" style="right:370.5px;top:558.84px;font-size:12px;line-height:14px;">0,00</div>
<div class="t d" style="right:295px;top:558.84px;font-size:12px;line-height:14px;">0,00</div>
<div class="t d" style="right:209px;top:558.84px;font-size:12px;line-height:14px;">0,00</div>
<div class="t d" style="left:199px;top:576.84px;font-size:12px;line-height:14px;">15.04.2018</div>
<div class="t d" style="right:454px;top:578.84px;font-size:12px;line-height:14px;">0,00</div>
<div class="t d" style="right:370.5px;top:578.84px;font-size:12px;line-height:14px;">0,00</div>
<div class="t d" style="right:295px;top:578.84px;font-size:12px;line-height:14px;">0,00</div>
<div class="t d" style="right:209px;top:578.84px;font-size:12px;line-height:14px;">0,00</div>
<div class="t d" style="right:447.5px;top:599.84px;font-size:12px;line-height:14px;">15,25</div>
<div class="t d" style="right:370.5px;top:599.84px;font-size:12px;line-height:14px;">56,00</div>
<div class="t d" style="right:295px;top:599.84px;font-size:12px;line-height:14px;">89,75</div>
<div class="t d" style="right:208.5px;top:599.84px;font-size:12px;line-height:14px;">14,75</div>
<div class="t d" style="left:766.6px;top:646.84px;font-size:12px;line-height:14px;">0</div>
<div class="r" style="left:310px;top:632px;width:1px;height:55px;background:#000;"></div>
<div class="r" style="left:380px;top:632px;width:1px;height:55px;background:#000;"></div>
<div class="r" style="left:193px;top:654px;width:256px;height:1px;background:#000;"></div>
<div class="r" style="left:193px;top:676px;width:256px;height:1px;background:#000;"></div>
<div class="t d" style="left:321px;top:631.50px;font-size:13px;line-height:16px;letter-spacing:-0.061px;">Stunden</div>
<div class="t d" style="left:396.2px;top:631.50px;font-size:13px;line-height:16px;letter-spacing:-0.365px;">Urlaub</div>
<div class="t d" style="left:193px;top:653.50px;font-size:13px;line-height:16px;letter-spacing:-0.128px;">Saldo alt</div>
<div class="t d" style="left:347px;top:653.50px;font-size:13px;line-height:16px;letter-spacing:0.156px;">78,12</div>
<div class="t d" style="left:416.2px;top:653.50px;font-size:13px;line-height:16px;letter-spacing:0.056px;">21,00</div>
<div class="t d" style="left:193px;top:675.50px;font-size:13px;line-height:16px;letter-spacing:-0.079px;">Summe Zeitraum</div>
<div class="t d" style="left:347px;top:675.50px;font-size:13px;line-height:16px;letter-spacing:0.156px;">14,75</div>
<div class="t d" style="left:422.8px;top:675.50px;font-size:13px;line-height:16px;letter-spacing:0.286px;">0,00</div>
<div class="r" style="left:1056px;top:158px;width:17px;height:529px;background:#ebebeb;"></div>
<div class="r" style="left:1056px;top:208px;width:17px;height:240px;background:#cdcdcd;"></div>
<svg class="r" style="left:1060px;top:162px" width="9" height="8" viewBox="0 0 9 8"><path d="M1.2 6.4L4.6 2.4L8 6.4" stroke="#767676" stroke-width="2.2" fill="none"/></svg>
<svg class="r" style="left:1060px;top:675px" width="9" height="8" viewBox="0 0 9 8"><path d="M1.2 1.4L4.6 5.4L8 1.4" stroke="#767676" stroke-width="2.2" fill="none"/></svg>
<div class="r" style="left:2px;top:687px;width:1071px;height:17px;background:#eeeeee;"></div>
<svg class="r" style="left:6px;top:691px" width="6" height="9" viewBox="0 0 6 9"><path d="M5 0.8L1.4 4.5L5 8.2" stroke="#c6c6c6" stroke-width="2" fill="none"/></svg>
<svg class="r" style="left:1045px;top:691px" width="6" height="9" viewBox="0 0 6 9"><path d="M1 0.8L4.6 4.5L1 8.2" stroke="#c6c6c6" stroke-width="2" fill="none"/></svg>
<div class="r" style="left:2px;top:704px;width:1071px;height:1px;background:#c4c4c4;"></div>
<div class="r" style="left:2px;top:705px;width:1071px;height:21px;background:#f0f0f0;"></div>
<div class="r" style="left:0px;top:726px;width:1075px;height:1px;background:#ababab;"></div>
<div class="t " style="left:7.2px;top:708.0px;font-size:11px;line-height:14px;letter-spacing:-0.102px;">Seite 1 von 1</div>
<div class="t " style="left:884.7px;top:708.0px;font-size:11px;line-height:14px;letter-spacing:0.183px;">100%</div>
<div class="r" style="left:930px;top:714px;width:7px;height:1px;background:#666;"></div>
<div class="r" style="left:944px;top:713px;width:50px;height:3px;background:#1072c6;"></div>
<div class="r" style="left:994px;top:710px;width:3px;height:10px;background:#8a8a8a;"></div>
<div class="r" style="left:997px;top:714px;width:51px;height:1px;background:#8a8a8a;"></div>
<div class="r" style="left:1054px;top:714px;width:7px;height:1px;background:#666;"></div>
<div class="r" style="left:1057px;top:711px;width:1px;height:7px;background:#666;"></div>
<div class="r" style="left:0px;top:727px;width:1075px;height:28px;background:#f0f0f0;"></div>
<div class="r" style="left:1074px;top:727px;width:1px;height:47px;background:#f0f0f0;"></div>
<div class="r" style="left:391px;top:727px;width:108px;height:24px;background:#666666;"></div>
<div class="t " style="left:30.1px;top:731.0px;font-size:11px;line-height:14px; color:#555;letter-spacing:-0.026px;">Berichtsverwaltung</div>
<div class="t " style="left:184px;top:731.0px;font-size:11px;line-height:14px; color:#555;letter-spacing:0.164px;">Zeitdaten</div>
<div class="t " style="left:291px;top:731.0px;font-size:11px;line-height:14px; color:#555;letter-spacing:-0.078px;">Zeitnachweise</div>
<div class="t w" style="left:420.5px;top:731.0px;font-size:11px;line-height:14px;letter-spacing:-0.171px;">Vorschau</div>
<svg class="r" style="left:481px;top:734px" width="9" height="9" viewBox="0 0 9 9"><path d="M1 1L8 8M8 1L1 8" stroke="#fff" stroke-width="1.6"/></svg>
<svg class="r" style="left:1060.5px;top:737.0px" width="8" height="4" viewBox="0 0 8 4"><path d="M0 0H8L4.0 4Z" fill="#333"/></svg>
<svg class="r" style="left:12px;top:730.3px" width="17" height="15" viewBox="0 0 17 15"><rect x="2" y="0.6" width="11" height="13" rx="1" fill="#cfe3f6" stroke="#3f86c9" stroke-width="1.1"/>
<rect x="4.6" y="3" width="6" height="5" fill="#f7fbff" stroke="#8db7e0" stroke-width="0.6"/>
<g stroke="#3f6fa0" stroke-width="1"><path d="M0.6 3H3M0.6 5.6H3M0.6 8.2H3M0.6 10.8H3"/></g><path d="M6 13.6L7 10.6L13 4.6L15 6.6L9 12.6Z" fill="#f2a23a" stroke="#b86a14" stroke-width="0.5"/><path d="M13 4.6L14 3.6L16 5.6L15 6.6Z" fill="#e66aa0"/></svg>
<svg class="r" style="left:165px;top:731px" width="16" height="16" viewBox="0 0 16 16"><circle cx="8" cy="8" r="7" fill="#d6d6d6" stroke="#8c8c8c" stroke-width="1.2"/><circle cx="8" cy="8" r="4.6" fill="#5c9ede" stroke="#fff" stroke-width="1"/><path d="M8 5.4V8.2H10.4" stroke="#fff" stroke-width="1.1" fill="none"/></svg>
<svg class="r" style="left:272px;top:730.3px" width="17" height="15" viewBox="0 0 17 15"><rect x="2" y="0.6" width="11" height="13" rx="1" fill="#cfe3f6" stroke="#3f86c9" stroke-width="1.1"/>
<rect x="4.6" y="3" width="6" height="5" fill="#f7fbff" stroke="#8db7e0" stroke-width="0.6"/>
<g stroke="#3f6fa0" stroke-width="1"><path d="M0.6 3H3M0.6 5.6H3M0.6 8.2H3M0.6 10.8H3"/></g></svg>
<svg class="r" style="left:403px;top:731px" width="16" height="16" viewBox="0 0 16 16"><rect x="1" y="0.6" width="10" height="13" fill="#f7f7f7" stroke="#d9cdbb" stroke-width="1"/>
<path d="M3 3.5H9M3 5.5H9" stroke="#9a9a9a" stroke-width="0.8"/>
<circle cx="8.6" cy="8.6" r="3.8" fill="#d9ecfb" stroke="#4a8fd0" stroke-width="1.4"/>
<path d="M11.4 11.4L14.8 14.8" stroke="#e08a2a" stroke-width="2.2"/></svg>
<div class="r" style="left:0px;top:755px;width:1075px;height:1px;background:#c4c4c4;"></div>
<div class="r" style="left:0px;top:756px;width:1075px;height:18px;background:#f0f0f0;"></div>
<svg class="r" style="left:4px;top:759px" width="16" height="14" viewBox="0 0 16 14"><path d="M8 0.9L15.2 12.8H0.8Z" fill="#f8c858" stroke="#e39a25" stroke-width="1.2" stroke-linejoin="round"/><rect x="7.1" y="4.2" width="1.8" height="4.8" fill="#333"/><rect x="7.1" y="10" width="1.8" height="1.7" fill="#333"/></svg>
<div class="t " style="left:26.2px;top:759.0px;font-size:11px;line-height:14px;letter-spacing:-0.136px;">17:07 Fehler beim Laden @formReportZeitnachweis.DatenLaden</div>
<svg class="r" style="left:343px;top:765.0px" width="5" height="3" viewBox="0 0 5 3"><path d="M0 0H5L2.5 3Z" fill="#2b2b2b"/></svg>
<div class="r" style="left:358px;top:757px;width:1px;height:16px;background:#d0d0d0;"></div>
<svg class="r" style="left:367px;top:758px" width="15" height="16" viewBox="0 0 15 16"><rect x="0.7" y="2" width="13" height="12.4" fill="#fbfbfb" stroke="#b9b9b9" stroke-width="1.1"/>
<rect x="0.2" y="1.6" width="14" height="3" fill="#dd5a42"/>
<path d="M3.6 0.2V3M10.8 0.2V3" stroke="#7f95ad" stroke-width="1.4"/>
<path d="M3 8L4.2 9.2L6.2 6.8M3 12L4.2 13.2L6.2 10.8" stroke="#3f9a4a" stroke-width="1" fill="none"/>
<path d="M8 8.4H12M8 12.2H12" stroke="#999" stroke-width="1"/></svg>
<div class="t " style="left:389px;top:759.0px;font-size:11px;line-height:14px;letter-spacing:-0.093px;">2 offene Reminder mit 12 Aufgaben</div>
<svg class="r" style="left:565px;top:765.0px" width="5" height="3" viewBox="0 0 5 3"><path d="M0 0H5L2.5 3Z" fill="#2b2b2b"/></svg>
<div class="t " style="left:776.8px;top:759.0px;font-size:11px;line-height:14px;letter-spacing:-0.186px;">User: sa, DB:PEP4, Server:MCWIN10</div>
<div class="t " style="left:969.3px;top:759.0px;font-size:11px;line-height:14px;letter-spacing:0.171px;">V4.116.4.0(584)</div>
<div class="r" style="left:1071px;top:766px;width:2px;height:2px;background:#7a7a7a;"></div>
<div class="r" style="left:1068px;top:769px;width:2px;height:2px;background:#7a7a7a;"></div>
<div class="r" style="left:1071px;top:769px;width:2px;height:2px;background:#7a7a7a;"></div>
<div class="r" style="left:1065px;top:772px;width:2px;height:2px;background:#7a7a7a;"></div>
<div class="r" style="left:1068px;top:772px;width:2px;height:2px;background:#7a7a7a;"></div>
<div class="r" style="left:1071px;top:772px;width:2px;height:2px;background:#7a7a7a;"></div>
</div></body></html>
